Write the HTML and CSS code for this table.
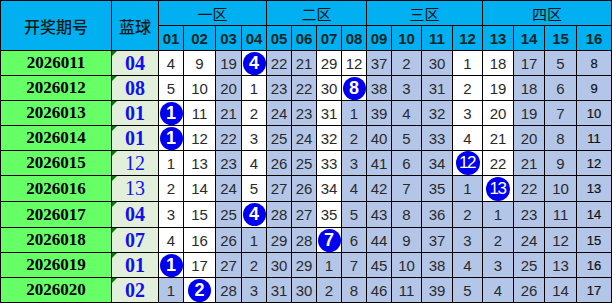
FILE: index.html
```html
<!DOCTYPE html>
<html lang="zh">
<head>
<meta charset="utf-8">
<title>蓝球遗漏</title>
<link rel="stylesheet" href="styles.css">
</head>
<body>
<div class="grid">
  <div class="h hq">开奖期号</div>
  <div class="h hq">蓝球</div>
  <div class="h hz">一区</div>
  <div class="h hz">二区</div>
  <div class="h hz">三区</div>
  <div class="h hz">四区</div>
  <div class="h hn">01</div><div class="h hn">02</div><div class="h hn">03</div><div class="h hn">04</div>
  <div class="h hn">05</div><div class="h hn">06</div><div class="h hn">07</div><div class="h hn">08</div>
  <div class="h hn">09</div><div class="h hn">10</div><div class="h hn">11</div><div class="h hn">12</div>
  <div class="h hn">13</div><div class="h hn">14</div><div class="h hn">15</div><div class="h hn">16</div>

  <div class="qi">2026011</div><div class="lan">04</div>
  <div class="n w">4</div><div class="n w">9</div><div class="n">19</div><div class="n w"><span class="ball">4</span></div>
  <div class="n">22</div><div class="n">21</div><div class="n w">29</div><div class="n w">12</div>
  <div class="n">37</div><div class="n">2</div><div class="n">30</div><div class="n w">1</div>
  <div class="n w">18</div><div class="n">17</div><div class="n">5</div><div class="n l">8</div>

  <div class="qi">2026012</div><div class="lan">08</div>
  <div class="n w">5</div><div class="n w">10</div><div class="n">20</div><div class="n w">1</div>
  <div class="n">23</div><div class="n">22</div><div class="n w">30</div><div class="n w"><span class="ball">8</span></div>
  <div class="n">38</div><div class="n">3</div><div class="n">31</div><div class="n w">2</div>
  <div class="n w">19</div><div class="n">18</div><div class="n">6</div><div class="n l">9</div>

  <div class="qi">2026013</div><div class="lan">01</div>
  <div class="n w"><span class="ball">1</span></div><div class="n w">11</div><div class="n">21</div><div class="n w">2</div>
  <div class="n">24</div><div class="n">23</div><div class="n w">31</div><div class="n">1</div>
  <div class="n">39</div><div class="n">4</div><div class="n">32</div><div class="n w">3</div>
  <div class="n w">20</div><div class="n">19</div><div class="n">7</div><div class="n l">10</div>

  <div class="qi">2026014</div><div class="lan">01</div>
  <div class="n w"><span class="ball">1</span></div><div class="n w">12</div><div class="n">22</div><div class="n w">3</div>
  <div class="n">25</div><div class="n">24</div><div class="n w">32</div><div class="n">2</div>
  <div class="n">40</div><div class="n">5</div><div class="n">33</div><div class="n w">4</div>
  <div class="n w">21</div><div class="n">20</div><div class="n">8</div><div class="n l">11</div>

  <div class="qi">2026015</div><div class="lan thin">12</div>
  <div class="n w">1</div><div class="n w">13</div><div class="n">23</div><div class="n w">4</div>
  <div class="n">26</div><div class="n">25</div><div class="n w">33</div><div class="n">3</div>
  <div class="n">41</div><div class="n">6</div><div class="n">34</div><div class="n w"><span class="ball two">12</span></div>
  <div class="n w">22</div><div class="n">21</div><div class="n">9</div><div class="n l">12</div>

  <div class="qi">2026016</div><div class="lan thin">13</div>
  <div class="n w">2</div><div class="n w">14</div><div class="n">24</div><div class="n w">5</div>
  <div class="n">27</div><div class="n">26</div><div class="n w">34</div><div class="n">4</div>
  <div class="n">42</div><div class="n">7</div><div class="n">35</div><div class="n">1</div>
  <div class="n w"><span class="ball two">13</span></div><div class="n">22</div><div class="n">10</div><div class="n l">13</div>

  <div class="qi">2026017</div><div class="lan">04</div>
  <div class="n w">3</div><div class="n w">15</div><div class="n">25</div><div class="n w"><span class="ball">4</span></div>
  <div class="n">28</div><div class="n">27</div><div class="n w">35</div><div class="n">5</div>
  <div class="n">43</div><div class="n">8</div><div class="n">36</div><div class="n">2</div>
  <div class="n">1</div><div class="n">23</div><div class="n">11</div><div class="n l">14</div>

  <div class="qi">2026018</div><div class="lan">07</div>
  <div class="n w">4</div><div class="n w">16</div><div class="n">26</div><div class="n">1</div>
  <div class="n">29</div><div class="n">28</div><div class="n w"><span class="ball">7</span></div><div class="n">6</div>
  <div class="n">44</div><div class="n">9</div><div class="n">37</div><div class="n">3</div>
  <div class="n">2</div><div class="n">24</div><div class="n">12</div><div class="n l">15</div>

  <div class="qi">2026019</div><div class="lan">01</div>
  <div class="n w"><span class="ball">1</span></div><div class="n w">17</div><div class="n">27</div><div class="n">2</div>
  <div class="n">30</div><div class="n">29</div><div class="n">1</div><div class="n">7</div>
  <div class="n">45</div><div class="n">10</div><div class="n">38</div><div class="n">4</div>
  <div class="n">3</div><div class="n">25</div><div class="n">13</div><div class="n l">16</div>

  <div class="qi">2026020</div><div class="lan">02</div>
  <div class="n">1</div><div class="n w"><span class="ball">2</span></div><div class="n">28</div><div class="n">3</div>
  <div class="n">31</div><div class="n">30</div><div class="n">2</div><div class="n">8</div>
  <div class="n">46</div><div class="n">11</div><div class="n">39</div><div class="n">5</div>
  <div class="n">4</div><div class="n">26</div><div class="n">14</div><div class="n l">17</div>
</div>
</body>
</html>
```

FILE: styles.css
```css
html, body {
  margin: 0;
  padding: 0;
  background: #ffffff;
}

.grid {
  display: grid;
  width: 612px;
  box-sizing: border-box;
  padding: 1px;
  gap: 1px;
  background: #000000;
  grid-template-columns: 110px 46px 24px 31px 25px 24px 24px 24px 24px 24px 24px 29px 30px 29px 30px 30px 31px 34px;
  grid-template-rows: 24px 24px 24px 24px 24px 24px 24px 25px 25px 24px 24px 24px;
}

.grid > div {
  display: flex;
  align-items: center;
  justify-content: center;
  overflow: hidden;
}

.h {
  background: #00b0f0;
  color: #0a1a1a;
}

.hq {
  grid-row: span 2;
  font-family: "Noto Sans CJK SC", sans-serif;
  font-size: 16px;
  font-weight: 500;
}

.hz {
  grid-column: span 4;
  font-family: "Noto Sans CJK SC", sans-serif;
  font-size: 15px;
  font-weight: 400;
  color: #111;
}

.hn {
  font-family: "Liberation Sans", Arial, sans-serif;
  font-size: 15px;
  font-weight: 700;
  color: #0b2626;
}

.qi {
  background: #66ff66;
  font-family: "Liberation Serif", "Times New Roman", serif;
  font-size: 17px;
  font-weight: 700;
  color: #000;
}

.lan {
  position: relative;
  background: #e2efda;
  font-family: "Liberation Serif", "Times New Roman", serif;
  font-size: 20px;
  font-weight: 700;
  color: #1010f0;
}

.lan.thin {
  font-weight: 400;
}

.lan::before {
  content: "";
  position: absolute;
  left: 0;
  top: 0;
  width: 0;
  height: 0;
  border-top: 5px solid #0a7a0a;
  border-right: 5px solid transparent;
}

.n {
  background: #b4c6e7;
  font-family: "Liberation Sans", Arial, sans-serif;
  font-size: 15px;
  color: #2a2a2a;
}

.n.w {
  background: #ffffff;
}

.n.l {
  font-size: 13px;
  color: #111;
  -webkit-text-stroke: 0.2px #111;
}

.ball {
  display: flex;
  align-items: center;
  justify-content: center;
  width: 23px;
  height: 23px;
  border-radius: 50%;
  background: #0000f0;
  color: #ffffff;
  font-family: "Liberation Sans", Arial, sans-serif;
  font-size: 18px;
  font-weight: 700;
}

.ball.two {
  width: 24px;
  height: 24px;
  font-size: 17px;
  font-weight: 400;
  letter-spacing: -1.5px;
  padding-right: 1px;
  box-sizing: border-box;
}
```
